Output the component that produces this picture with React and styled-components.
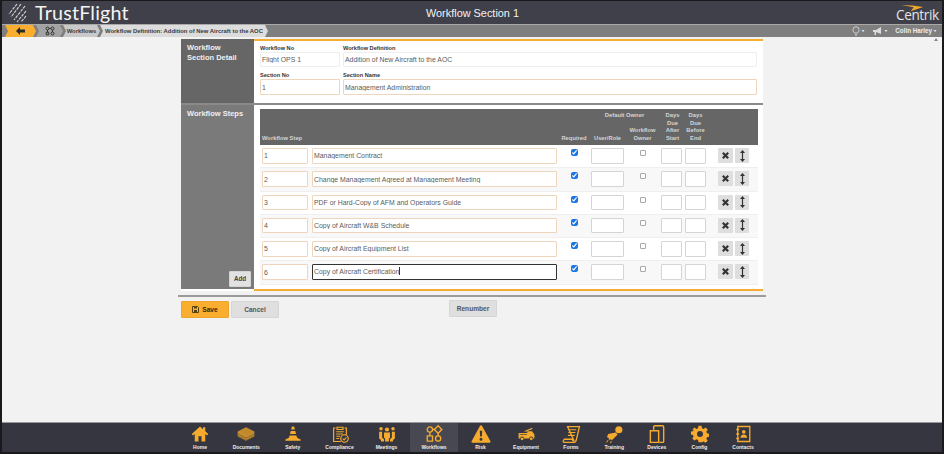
import React from "react";
import styled, { createGlobalStyle } from "styled-components";

const Global = createGlobalStyle`
  html, body { margin: 0; padding: 0; background: #111; }
  * { box-sizing: border-box; }
`;
const Frame = styled.div`
  width: 944px; height: 454px; display: flex; flex-direction: column;
  border-style: solid; border-color: #1a1a1c; border-width: 1px 2px 2px 2px;
  background: #f2f2f2; font-family: "Liberation Sans", Arial, sans-serif; overflow: hidden;
`;
const Header = styled.header`
  height: 23px; flex: none; background: #3f4049; display: flex; align-items: center;
  justify-content: space-between; padding: 0 2px 0 6px; position: relative; color: #fff;
`;
const Brand = styled.div`display: flex; align-items: center; gap: 8px;`;
const BrandName = styled.span`font: 400 19.7px/22px Lato, sans-serif; color: #f4f4f4; letter-spacing: .2px;`;
const Title = styled.h1`
  margin: 0; position: absolute; left: 0; right: 0; text-align: center; padding-left: 1px;
  font: 400 10.9px/22px "Liberation Sans", sans-serif; color: #f2f2f2;
`;
const CentrikBox = styled.div`position: relative; padding: 5px 0 0; width: 44px; height: 23px;`;
const CentrikText = styled.span`font: 400 13.6px/17px "Open Sans", sans-serif; color: #e4e4e6; letter-spacing: -0.4px;`;
const Swoosh = styled.svg`position: absolute; left: 5px; top: 4px;`;
const Crumbs = styled.nav`
  height: 13px; flex: none; background: #7f7f7f; border-top: 1px solid #a9a9a9;
  display: flex; align-items: center; padding: 0 6px 0 3px; color: #333;
`;
const Crumb = styled.div`
  height: 12px; display: flex; align-items: center; justify-content: center;
  width: ${p => p.$w}px; background: ${p => p.$bg};
  clip-path: polygon(0 0, calc(100% - 3px) 0, 100% 50%, calc(100% - 3px) 100%, 0 100%, 3px 50%);
  font: 700 5.9px/12px "Liberation Sans", sans-serif; color: #3a3a3a; white-space: nowrap;
`;
const Right = styled.div`margin-left: auto; display: flex; align-items: center; color: #eee; font: 700 6.3px/12px "Liberation Sans", sans-serif;`;
const Caret = styled.span`font-size: 4px; margin: 0 ${p => p.$mr || 0}px 0 2px;`;
const Main = styled.main`flex: 1; width: 588px; margin: 0 auto; padding: 2px 0 0; display: flex; flex-direction: column; position: relative;`;
const Card = styled.section`margin-left: 3px; width: 582px; background: #fff;`;
const Band = styled.div`display: flex; height: ${p => p.$h}px;`;
const Side = styled.aside`
  width: 73px; flex: none; background: ${p => p.$bg}; color: #f0f0f0; padding: 4px 3px 2px 6px;
  font: 700 7.5px/10px "Liberation Sans", sans-serif; display: flex; flex-direction: column;
`;
const AddBtn = styled.button`
  margin: auto 0 0 auto; width: 22px; height: 16px; padding: 0; border: 1px solid #d4d4d4; border-radius: 1px;
  background: #e2e2e2; color: #444; font: 700 6.3px/14px "Liberation Sans", sans-serif;
`;
const Detail = styled.div`
  flex: 1; border-top: 2px solid #f5ae33; padding: 3px 6px 0 6px;
  display: grid; grid-template-columns: 80px 414px; column-gap: 3px; grid-auto-rows: 8px 15px 4px 8px 16px;
`;
const FieldLabel = styled.label`
  font: 700 5.6px/8px "Liberation Sans", sans-serif; color: #333; grid-row: ${p => p.$row};
`;
const Field = styled.input`
  width: 100%; height: 100%; padding: 0 1px; border-radius: 1px; outline: none; min-width: 0;
  border: 1px solid ${p => p.$plain ? "#eeeeee" : "#eed5bb"};
  grid-row: ${p => p.$row}; background: #fff; color: #5c5c5c;
  font: 400 6.9px/13px "Liberation Sans", sans-serif;
`;
const Divider = styled.div`height: 2px; background: #8a8a8a;`;
const Steps = styled.div`flex: 1; display: flex; flex-direction: column; padding: 4px 5px 0 6px;`;
const STEP_COLS = "50px 245px 34px 33px 37px 24px 33px 17px 14px";
const TableHead = styled.div`
  height: 36px; flex: none; background: #666; padding-left: 2px; display: grid; grid-template-columns: ${STEP_COLS};
  grid-template-rows: 10px 26px; color: #d4d4d4; font: 700 5.8px/7.4px "Liberation Sans", sans-serif; text-align: center;
`;
const HeadCell = styled.div`
  grid-column: ${p => p.$col}; grid-row: ${p => p.$row || 2}; align-self: end; padding-bottom: 3px; white-space: pre-line;
  margin-left: ${p => p.$shift || 0}px; text-align: ${p => p.$left ? "left" : "center"};
`;
const OwnerHead = styled.div`grid-column: 4 / 6; grid-row: 1; padding: 3px 3px 0 0; line-height: 7px;`;
const Row = styled.div`
  height: 23.3px; flex: none; padding: 3px 0 0 2px; display: grid; grid-template-columns: ${STEP_COLS};
  grid-auto-rows: 15.5px; align-items: start; background: ${p => p.$alt ? "#f8f8f8" : "#fff"};
  border-bottom: 1px solid #efefef;
`;
const StepNo = styled(Field)`width: 46px;`;
const Blank = styled.input`
  width: ${p => p.$w}px; height: 100%; border: 1px solid #d4d4d4; border-radius: 1px; background: #fff; outline: none; padding: 0;
`;
const Check = styled.input`
  margin: 1px 0 0; width: 7px; height: 7px; justify-self: center; accent-color: #1976e2;
`;
const Empty = styled.input`
  appearance: none; margin: 2px 0 0 1px; width: 6px; height: 6px; justify-self: center;
  border: 1px solid #a8a8a8; border-radius: 1px; background: #fff;
`;
const Focused = styled.div`
  width: 245px; height: 15.5px; border: 1px solid #333; border-radius: 1px; background: #fff; padding: 0 1px;
  font: 400 6.9px/13.5px "Liberation Sans", sans-serif; color: #5c5c5c; white-space: nowrap;
`;
const TextCaret = styled.span`display: inline-block; width: 1px; height: 8px; background: #333; vertical-align: -1px;`;
const IconBtn = styled.button`
  width: ${p => p.$w}px; height: 15px; padding: 0; border: 0; border-radius: 1px; background: #dedede; color: #333;
  display: flex; align-items: center; justify-content: center;
`;
const RuleEnd = styled.div`height: 2px; background: #f5ae33; margin-left: 73px;`;
const Gap = styled.div`height: 4px;`;
const Heavy = styled.div`height: 2px; background: #9a9a9a;`;
const Actions = styled.div`display: flex; align-items: flex-start; padding: 4px 0 0 3px;`;
const Btn = styled.button`
  width: 48px; height: 17px; margin-left: ${p => p.$ml || 0}px; margin-top: ${p => p.$mt || 0}px; padding: 0; border-radius: 1px;
  border: 1px solid ${p => p.$primary ? "#eaa52c" : "#d6d6d6"}; background: ${p => p.$primary ? "#f9ae2f" : "#dfdfdf"};
  color: ${p => p.$primary ? "#3a2a08" : "#555"}; font: 700 6.6px/15px "Liberation Sans", sans-serif;
  display: flex; align-items: center; justify-content: center; gap: 3px;
`;
const ScrollMark = styled.span`
  position: absolute; right: -172px; top: 1px; width: 0; height: 0;
  border: 2px solid transparent; border-bottom: 3px solid #888; border-top: 0;
`;
const BottomNav = styled.nav`
  height: 30px; flex: none; background: #35363f; border-top: 1px solid #999; display: flex; justify-content: center; padding-right: 2px;
`;
const NavItem = styled.div`
  width: ${p => p.$w}px; height: 100%; padding-top: 2px; flex: none;
  background: ${p => p.$active ? "#474851" : "transparent"}; color: #f6ab2e; display: flex; flex-direction: column; align-items: center;
`;
const NavIconBox = styled.div`height: 18px; display: flex; align-items: center; justify-content: center;`;
const NavLabel = styled.span`font: 700 5px/7px "Liberation Sans", sans-serif; color: #eee; margin-top: 1px; white-space: nowrap;`;

const NavSvg = ({ children, size = 18 }) => (
  <svg width={size} height={size} viewBox="0 0 24 24" fill="currentColor">{children}</svg>
);
const S = { fill: "none", stroke: "currentColor", strokeWidth: 2 };
const nav = [
  ["Home", 46, <NavSvg><path d="M12 2 1 12l1.600 2L5 12v10h5v-7h4v7h5V12l2.400 2 1.600-2-4-3.600V3h-3v2.800z" /></NavSvg>],
  ["Documents", 46.5, <NavSvg size={20}><path d="M12 4 22 9v6l-10 5-10-5V9z" opacity=".75" /><path d="M12 5.500 20 9.500l-8 4-8-4z" fill="#c08a2a" /><path d="M2 12l10 5 10-5M2 14.500l10 5 10-5" fill="none" stroke="#6d5526" strokeWidth=".8" /></NavSvg>],
  ["Safety", 46.5, <NavSvg><path d="M10.500 2h3l1 4h-5zM9 8h6l1 4H8zM7.500 14h9l1 3 4.500 2.200c.6.5.3 1.800-.5 1.800H2.500c-.8 0-1.100-1.300-.5-1.800L6.500 17z" /></NavSvg>],
  ["Compliance", 47, <NavSvg><path d="M8 3h8v3H8zM6 4H3.500v18H13M18 4h2.500v9" {...S} strokeWidth="1.600" /><path d="M7 9h10M7 12h9M7 15h5M7 18h4" {...S} strokeWidth="1.300" /><circle cx="18" cy="18" r="5" {...S} strokeWidth="1.600" /><path d="m15.500 18 2 2 3-3.500" {...S} strokeWidth="1.400" /></NavSvg>],
  ["Meetings", 47, <NavSvg><circle cx="12" cy="6" r="2.800" /><circle cx="4" cy="5" r="2.300" /><circle cx="20" cy="5" r="2.300" /><path d="M8 10h8v7l-1.500 1v4h-5v-4L8 17zM1.500 9h4v7.500L8 19v3H4v-2l-2.500-2zM22.500 9h-4v7.500L16 19v3h4v-2l2.500-2z" /></NavSvg>],
  ["Workflows", 48, <NavSvg><g {...S} strokeWidth="1.800"><circle cx="6.500" cy="6" r="3.500" /><path d="M14 2.500h7V9.500h-7z" transform="rotate(45 17.500 6)" /><path d="M3 14.500h7v7H3z" /><circle cx="17.500" cy="18" r="3.500" /><path d="M10 6h3.500M6.500 9.500v5M17.500 10v4.500" /></g></NavSvg>],
  ["Risk", 45, <NavSvg size={20}><path fillRule="evenodd" d="M12 1.500c.5 0 1 .3 1.300.8l10 18.500c.4.800-.1 1.700-1 1.700H1.700c-.9 0-1.400-.9-1-1.700l10-18.500c.3-.5.8-.8 1.300-.8zM10.500 8l.5 7h2l.5-7zM12 16.500a1.800 1.800 0 1 0 0 3.600 1.800 1.800 0 0 0 0-3.600z" /></NavSvg>],
  ["Equipment", 46, <NavSvg size={19}><path d="M2 10h11V8h6l3 4v5h-1.500a2.500 2.500 0 0 0-5 0H9a2.500 2.500 0 0 0-5 0H2zM9 8l10-4.500.6 1.400L11 8.500z" /><circle cx="6.500" cy="17.500" r="1.800" /><circle cx="18" cy="17.500" r="1.800" /><path d="M3.500 12h9" stroke="#35363f" strokeWidth=".8" /></NavSvg>],
  ["Forms", 44, <NavSvg size={19}><path d="M7 2h15l-4 17c-.5 2-2 3-4 3H3c-1.500 0-2-1.500-1-2.500L3 18h10l1 2 1-.5z" {...S} strokeWidth="1.700" /><path d="M9 6h9M8 9.500h9M7.500 13h8.500" {...S} strokeWidth="1.500" /></NavSvg>],
  ["Training", 42.5, <NavSvg size={19}><circle cx="17.500" cy="6" r="4.500" /><path d="M13.500 9.500 16 12 9 19l-2.500-1-1 1-1-1 .5-1.500-2.500-1L3 14l1-2.500z" /><path d="M4 19l-2 3M8 20l-1 3" {...S} strokeWidth="1.200" /></NavSvg>],
  ["Devices", 42.5, <NavSvg size={20}><path d="M8 7V3.500C8 2.700 8.700 2 9.500 2h9c.8 0 1.500.7 1.500 1.500V21c0 .6-.5 1-1 1h-4" {...S} strokeWidth="1.700" /><path d="M4 8h10v14H4z" {...S} strokeWidth="1.700" /></NavSvg>],
  ["Config", 43, <NavSvg><path fillRule="evenodd" d="M10 1h4l.7 3.300 2 .9L19.500 3.400l2.800 2.800-1.800 2.800.9 2 2.600.5v4l-2.600.7-.9 2 1.800 2.800-2.800 2.800-2.800-1.800-2 .9L14 23h-4l-.7-3.100-2-.9-2.800 1.800-2.800-2.800L3.500 15.200l-.9-2-2.600-.7v-4l2.600-.2.900-2L1.700 6.200l2.800-2.800L7.300 5.200l2-.9zM12 8a4 4 0 1 0 0 8 4 4 0 0 0 0-8z" /></NavSvg>],
  ["Contacts", 44, <NavSvg><path d="M5 2h16v20H5z" {...S} strokeWidth="1.800" /><path d="M3 6h4M3 12h4M3 18h4" {...S} /><circle cx="13" cy="9" r="2.500" /><path d="M8.500 17c0-3 2-4.500 4.500-4.500s4.500 1.500 4.500 4.500z" /></NavSvg>],
];
const steps = [
  "Management Contract",
  "Change Management Agreed at Management Meeting",
  "PDF or Hard-Copy of AFM and Operators Guide",
  "Copy of Aircraft W&B Schedule",
  "Copy of Aircraft Equipment List",
  "Copy of Aircraft Certification",
];
const XIcon = () => (
  <svg width="9" height="9" viewBox="0 0 10 10"><path d="M2 2l6 6M8 2 2 8" stroke="#333" strokeWidth="2.400" /></svg>
);
const MoveIcon = () => (
  <svg width="7" height="12" viewBox="0 0 7 12"><path d="M3.500 2v8" stroke="#333" strokeWidth="1.200" /><path d="M3.500 0 6 3H1zM3.500 12 6 9H1z" fill="#333" /></svg>
);

export default function App() {
  return (
    <Frame>
      <Global />
      <Header>
        <Brand>
          <svg width="19" height="20" viewBox="0 0 19 20" stroke="#d8d8d8" strokeWidth="1.100" strokeDasharray="3 1">
            <path d="M9 1 1 11M13 1 3 14M17 3 6 17M18 8l-9 11M18 13l-5 6" />
          </svg>
          <BrandName>TrustFlight</BrandName>
        </Brand>
        <Title>Workflow Section 1</Title>
        <CentrikBox>
          <Swoosh width="24" height="7" viewBox="0 0 30 9"><path d="M0 0c8 0 20 1 28 2.500L12 8 16 3z" fill="#f3a72b" /></Swoosh>
          <CentrikText>Centrik</CentrikText>
        </CentrikBox>
      </Header>
      <Crumbs>
        <Crumb $w={31} $bg="#f9ae2f">
          <svg width="9" height="8" viewBox="0 0 9 8"><path d="M0 4l4-4v2.500h5v3H4V8z" fill="#2b2b2b" /></svg>
        </Crumb>
        <Crumb $w={27} $bg="#a3a3a3">
          <svg width="10" height="10" viewBox="0 0 24 24" fill="none" stroke="#333" strokeWidth="2.400">
            <circle cx="6" cy="6" r="3.500" /><circle cx="18" cy="6" r="3.500" /><path d="M3 15h6v6H3z" /><circle cx="18" cy="18" r="3.500" /><path d="M9.500 6h5M6 9.500V15M18 9.500v5" />
          </svg>
        </Crumb>
        <Crumb $w={37} $bg="#c9c9c9">Workflows</Crumb>
        <Crumb $w={168} $bg="#dcdcdc">Workflow Definition: Addition of New Aircraft to the AOC</Crumb>
        <Right>
          <svg width="8" height="10" viewBox="0 0 8 10" fill="none" stroke="#ddd" strokeWidth=".8"><path d="M2.500 7C1 5.500 1 4.500 1 3.700a3 3 0 0 1 6 0C7 4.500 7 5.500 5.500 7zM3 8.200h2M3.300 9.400h1.400" /></svg>
          <Caret $mr={8}>▾</Caret>
          <svg width="11" height="9" viewBox="0 0 11 9" fill="#ddd"><path d="M1 3h3l5-3v7L4 5v3H2.500V5H1z" /></svg>
          <Caret $mr={8}>▾</Caret>
          <span>Colin Harley</span>
          <Caret>▾</Caret>
        </Right>
      </Crumbs>
      <Main>
        <ScrollMark />
        <Card>
          <Band $h={64}>
            <Side $bg="#666666">Workflow<br />Section Detail</Side>
            <Detail>
              <FieldLabel $row={1}>Workflow No</FieldLabel>
              <FieldLabel $row={1}>Workflow Definition</FieldLabel>
              <Field $plain $row={2} readOnly value="Flight OPS 1" />
              <Field $plain $row={2} readOnly value="Addition of New Aircraft to the AOC" />
              <FieldLabel $row={4}>Section No</FieldLabel>
              <FieldLabel $row={4}>Section Name</FieldLabel>
              <Field $row={5} readOnly value="1" />
              <Field $row={5} readOnly value="Management Administration" />
            </Detail>
          </Band>
          <Divider />
          <Band $h={184}>
            <Side $bg="#7a7a7a">
              Workflow Steps
              <AddBtn>Add</AddBtn>
            </Side>
            <Steps>
              <TableHead>
                <HeadCell $col={1} $left>Workflow Step</HeadCell>
                <HeadCell $col={3}>Required</HeadCell>
                <OwnerHead>Default Owner</OwnerHead>
                <HeadCell $col={4}>User/Role</HeadCell>
                <HeadCell $col={5}>{"Workflow\nOwner"}</HeadCell>
                <HeadCell $col={6} $row="1 / 3" $shift={-1}>{"Days\nDue\nAfter\nStart"}</HeadCell>
                <HeadCell $col={7} $row="1 / 3" $shift={-12}>{"Days\nDue\nBefore\nEnd"}</HeadCell>
              </TableHead>
              {steps.map((s, i) => (
                <Row key={s} $alt={i % 2 === 1}>
                  <StepNo readOnly value={String(i + 1)} />
                  {i === 5 ? <Focused>{s}<TextCaret /></Focused> : <Field readOnly value={s} />}
                  <Check type="checkbox" readOnly checked />
                  <Blank $w={33} readOnly />
                  <Empty type="checkbox" readOnly />
                  <Blank $w={21} readOnly />
                  <Blank $w={21} readOnly />
                  <IconBtn $w={15}><XIcon /></IconBtn>
                  <IconBtn $w={14}><MoveIcon /></IconBtn>
                </Row>
              ))}
            </Steps>
          </Band>
          <RuleEnd />
        </Card>
        <Gap />
        <Heavy />
        <Actions>
          <Btn $primary>
            <svg width="7" height="7" viewBox="0 0 7 7"><path d="M.5.500h5l1 1v5h-6z" fill="none" stroke="#5a4210" /><path d="M2 .500h3v2H2zM2 4h3v2.500H2z" fill="#5a4210" /></svg>
            Save
          </Btn>
          <Btn $ml={2}>Cancel</Btn>
          <Btn $ml={170} $mt={-1}>Renumber</Btn>
        </Actions>
      </Main>
      <BottomNav>
        {nav.map(([name, width, icon]) => (
          <NavItem key={name} $w={width} $active={name === "Workflows"}>
            <NavIconBox>{icon}</NavIconBox>
            <NavLabel>{name}</NavLabel>
          </NavItem>
        ))}
      </BottomNav>
    </Frame>
  );
}
